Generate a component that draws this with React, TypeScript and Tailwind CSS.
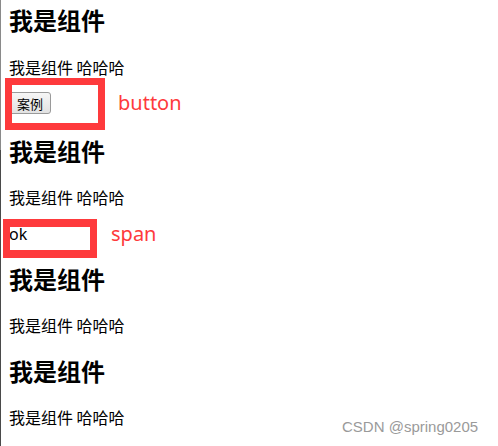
import React from "react";

const cjk = { fontFamily: '"Noto Sans CJK SC", "Noto Sans", sans-serif' };

function Heading({ mt }: { mt: string }) {
  return (
    <h2 className={`${mt} text-[24px] leading-[32px] font-bold text-black`} style={cjk}>
      我是组件
    </h2>
  );
}

function Para({ mt }: { mt: string }) {
  return (
    <p className={`${mt} text-[16px] leading-[22px] text-black`} style={cjk}>
      我是组件 哈哈哈
    </p>
  );
}

export default function App() {
  return (
    <div className="relative w-[498px] h-[446px] overflow-hidden bg-white">
      <div className="absolute left-0 top-0 w-px h-[150px] bg-[#8a8a8a]" />
      <div className="absolute left-0 top-[150px] w-px h-[296px] bg-[#4a4a4a]" />
      <div className="flex flex-col items-start pl-[9px]">
        <div className="mt-[4px]">
          <Heading mt="mt-0" />
        </div>
        <Para mt="mt-[20px]" />
        <div className="mt-[14px] h-[22px] flex items-center">
          <button
            className="h-[22px] w-[42px] flex items-center justify-center text-[13px] leading-none text-black border border-[#9a9a9a] rounded-[3px] bg-gradient-to-b from-[#f6f6f6] to-[#e2e2e2]"
            style={cjk}
          >
            案例
          </button>
        </div>
        <Heading mt="mt-[21px]" />
        <Para mt="mt-[19px]" />
        <span
          className="mt-[15px] text-[16px] leading-[22px] text-black"
          style={{ fontFamily: '"Noto Sans", sans-serif' }}
        >
          ok
        </span>
        <Heading mt="mt-[18px]" />
        <Para mt="mt-[19px]" />
        <Heading mt="mt-[19px]" />
        <Para mt="mt-[19px]" />
      </div>

      <div className="absolute left-[5px] top-[78px] w-[100px] h-[52px] border-[7px] border-[#fe3a3c]" />
      <div className="absolute left-[3px] top-[219px] w-[94px] h-[39px] border-x-[7px] border-y-[8px] border-[#fe3a3c]" />

      <div
        className="absolute left-[118px] top-[93px] text-[20px] leading-none text-[#fe3a3c]"
        style={{ fontFamily: '"Noto Sans", sans-serif' }}
      >
        button
      </div>
      <div
        className="absolute left-[111px] top-[224px] text-[20px] leading-none text-[#fe3a3c]"
        style={{ fontFamily: '"Noto Sans", sans-serif' }}
      >
        span
      </div>

      <div
        className="absolute left-[342px] top-[419px] text-[15px] leading-none text-[#9a9a9a]"
        style={{ fontFamily: '"Liberation Sans", Arial, sans-serif' }}
      >
        CSDN @spring0205
      </div>
    </div>
  );
}
